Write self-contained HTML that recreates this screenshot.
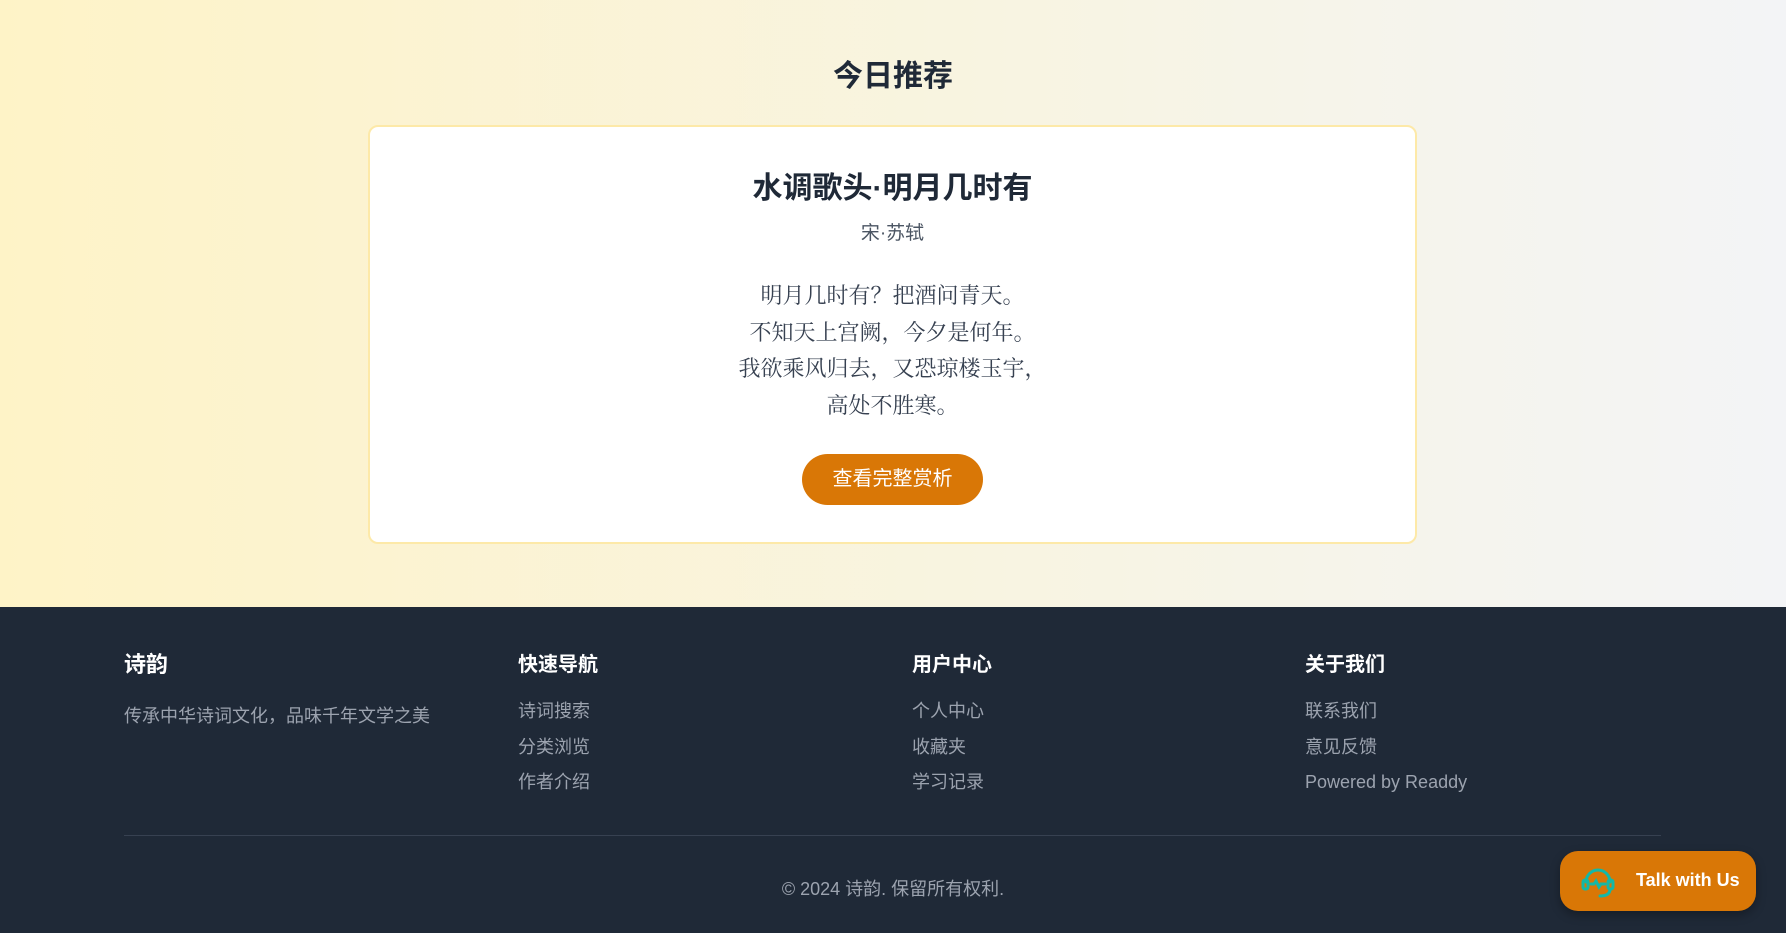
<!DOCTYPE html>
<html><head><meta charset="utf-8"><style>
*{margin:0;padding:0;box-sizing:border-box}
body{width:1786px;height:933px;overflow:hidden;font-family:"Liberation Sans","Noto Sans CJK SC",sans-serif;color:#1f2937}
.top{height:607px;background:linear-gradient(90deg,#fef3c7,#f3f4f6);position:relative}
h2{position:absolute;top:51px;width:100%;text-align:center;font-size:30px;font-weight:700}
.card{position:absolute;left:368px;top:125px;width:1049px;height:419px;background:#fff;border:2px solid #fde9a8;border-radius:10px;text-align:center}
.card h3{margin-top:38px;font-size:30px;font-weight:700;line-height:48px}
.au{font-size:19px;color:#4b5563;margin-top:6px;line-height:30px}
.poem{margin-top:29px;font-family:"Liberation Serif","Noto Serif CJK SC",serif;font-size:22px;color:#374151;line-height:36.5px}
.btn{display:inline-block;margin-top:30px;width:181px;height:51px;line-height:51px;background:#d97706;color:#fff;border-radius:26px;font-size:20px}
.foot{height:326px;background:#1f2937;position:relative;color:#9ca3af}
.col{position:absolute;top:43px}
.col b{display:block;color:#fff;font-size:20px;line-height:30px;margin-bottom:14px}
.col div{font-size:18px;line-height:35.5px}
.hr{position:absolute;left:124px;width:1537px;top:228px;border-top:1px solid #374151}
.copy{position:absolute;top:268px;width:100%;text-align:center;font-size:18px}
.talk{position:absolute;left:1560px;top:851px;width:196px;height:60px;background:#d97706;border-radius:18px;color:#fff;font-size:18px;font-weight:600;box-shadow:0 4px 10px rgba(0,0,0,.3)}
.talk span{position:absolute;left:76px;top:19px}
.talk svg{position:absolute;left:20px;top:13px}
</style></head><body>
<div class="top">
<h2>今日推荐</h2>
<div class="card">
<h3>水调歌头·明月几时有</h3>
<div class="au">宋·苏轼</div>
<div class="poem">明月几时有？把酒问青天。<br>不知天上宫阙，今夕是何年。<br>我欲乘风归去，又恐琼楼玉宇，<br>高处不胜寒。</div>
<div class="btn">查看完整赏析</div>
</div>
</div>
<div class="foot">
<div class="col" style="left:124px"><b style="font-size:22px">诗韵</b><div style="padding-top:5px">传承中华诗词文化，品味千年文学之美</div></div>
<div class="col" style="left:518px"><b>快速导航</b><div>诗词搜索</div><div>分类浏览</div><div>作者介绍</div></div>
<div class="col" style="left:912px"><b>用户中心</b><div>个人中心</div><div>收藏夹</div><div>学习记录</div></div>
<div class="col" style="left:1305px"><b>关于我们</b><div>联系我们</div><div>意见反馈</div><div>Powered by Readdy</div></div>
<div class="hr"></div>
<div class="copy">© 2024 诗韵. 保留所有权利.</div>
</div>
<div class="talk"><svg width="36" height="36" viewBox="0 0 36 36" fill="none" stroke="#14b8a6" stroke-width="3" stroke-linecap="round"><path d="M6 18a12 12 0 0 1 24 0"/><rect x="3" y="16" width="5" height="9" rx="2"/><rect x="28" y="16" width="5" height="9" rx="2"/><path d="M30 25c0 5-4 7-10 7"/><path d="M11 20l3 0 2-3 3 6 2-3 4 0"/></svg><span>Talk with Us</span></div>
</body></html>
